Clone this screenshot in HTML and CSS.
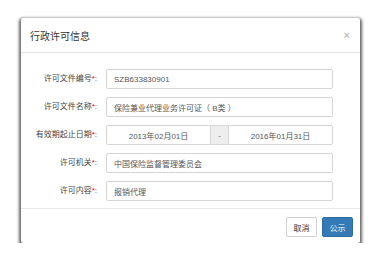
FILE: index.html
```html
<!DOCTYPE html>
<html lang="zh-CN">
<head>
    <meta charset="UTF-8">
    <title>行政许可信息</title>
    <link rel="stylesheet" href="styles.css">
</head>
<body>

    <div class="modal">
        <div class="modal-header">
            <h4 class="modal-title">行政许可信息</h4>
            <span class="close">&times;</span>
        </div>
        <div class="modal-body">
            <div class="row">
                <label>许可文件编号<i>*</i>:</label>
                <div class="field">SZB633830901</div>
            </div>
            <div class="row">
                <label>许可文件名称<i>*</i>:</label>
                <div class="field">保险兼业代理业务许可证（ B类 ）</div>
            </div>
            <div class="row">
                <label>有效期起止日期<i>*</i>:</label>
                <div class="date-group">
                    <div class="field center">2013年02月01日</div>
                    <span class="addon">-</span>
                    <div class="field center">2016年01月31日</div>
                </div>
            </div>
            <div class="row">
                <label>许可机关<i>*</i>:</label>
                <div class="field">中国保险监督管理委员会</div>
            </div>
            <div class="row">
                <label>许可内容<i>*</i>:</label>
                <div class="field">报销代理</div>
            </div>
        </div>
        <div class="modal-footer">
            <button class="btn">取消</button>
            <button class="btn btn-primary">公示</button>
        </div>
    </div>

</body>
</html>
```

FILE: styles.css
```css
body {
    font-family: "Liberation Sans", "Noto Sans CJK SC", sans-serif;
    background: #ffffff;
    margin: 0;
    padding: 18px 0 0 21px;
    color: #333;
}

.modal {
    width: 339px;
    background: #ffffff;
    border-radius: 2px;
    box-shadow: 0 2px 3px 2px rgba(0, 0, 0, 0.6);
}

.modal-header {
    height: 34px;
    padding: 0 9px;
    border-bottom: 1px solid #e5e5e5;
    display: flex;
    align-items: center;
    justify-content: space-between;
}

.modal-title {
    margin: 0;
    font-size: 10px;
    font-weight: normal;
    color: #333;
}

.close {
    color: #c4c4c4;
    font-size: 11px;
    font-weight: bold;
    margin-right: 1px;
}

.modal-body {
    padding: 16px 27px 7px 0;
    display: flex;
    flex-direction: column;
    gap: 8px;
}

.row {
    display: flex;
    align-items: center;
    height: 20px;
}

.row label {
    width: 76px;
    margin-right: 9px;
    text-align: right;
    font-size: 8px;
    color: #444;
    margin-top: -4px;
}

.row label i {
    color: #e00;
    font-style: normal;
}

.field {
    flex: 1;
    height: 20px;
    box-sizing: border-box;
    border: 1px solid #d5d5d5;
    border-radius: 2px;
    padding-left: 7px;
    font-size: 8px;
    color: #555;
    display: flex;
    align-items: center;
}

.center {
    justify-content: center;
    padding-left: 0;
}

.date-group {
    flex: 1;
    display: flex;
}

.date-group .field {
    width: 105px;
    flex: none;
}

.date-group .field:first-child {
    border-radius: 2px 0 0 2px;
}

.date-group .field:last-child {
    border-radius: 0 2px 2px 0;
}

.addon {
    width: 17px;
    height: 20px;
    box-sizing: border-box;
    background: #eeeeee;
    border-top: 1px solid #d5d5d5;
    border-bottom: 1px solid #d5d5d5;
    font-size: 8px;
    color: #666;
    display: flex;
    align-items: center;
    justify-content: center;
}

.modal-footer {
    border-top: 1px solid #e9e9e9;
    padding: 8px 7px 6px;
    display: flex;
    justify-content: flex-end;
    gap: 5px;
}

.btn {
    width: 31px;
    height: 20px;
    padding: 0;
    font-family: inherit;
    font-size: 8px;
    color: #333;
    background: #ffffff;
    border: 1px solid #d0d0d0;
    border-radius: 2px;
}

.btn-primary {
    background: #337ab7;
    border-color: #2e6da4;
    color: #ffffff;
}
```
